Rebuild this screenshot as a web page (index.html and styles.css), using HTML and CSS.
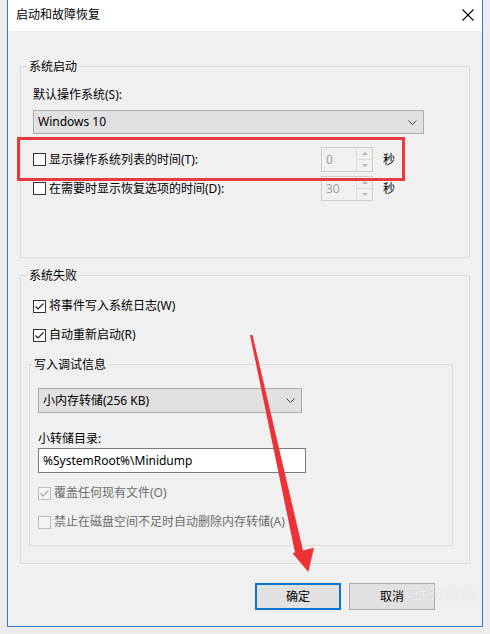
FILE: index.html
```html
<!DOCTYPE html>
<html>
<head>
<meta charset="utf-8">
<link rel="stylesheet" href="styles.css">
</head>
<body>
<div class="dialog">
  <div class="titlebar">
    <span class="title">启动和故障恢复</span>
    <svg class="close" width="12" height="12" viewBox="0 0 12 12"><path d="M0.5 0.5 L11.5 11.5 M11.5 0.5 L0.5 11.5" stroke="#000" stroke-width="1.1" fill="none"/></svg>
  </div>
  <div class="content">
    <div class="group g1">
      <div class="gtitle">系统启动</div>
      <div class="label l-default">默认操作系统(S):</div>
      <div class="combo c-os"><span>Windows 10</span><svg class="chev" width="9" height="5" viewBox="0 0 9 5"><path d="M0.5 0.5 L4.5 4.5 L8.5 0.5" stroke="#444" fill="none"/></svg></div>
      <div class="row r1">
        <span class="cb"></span>
        <span class="rlabel">显示操作系统列表的时间(T):</span>
        <div class="spin"><span class="sval">0</span><div class="sbtn"><span class="up"></span><span class="down"></span></div></div>
        <span class="unit">秒</span>
      </div>
      <div class="row r2">
        <span class="cb"></span>
        <span class="rlabel">在需要时显示恢复选项的时间(D):</span>
        <div class="spin"><span class="sval">30</span><div class="sbtn"><span class="up"></span><span class="down"></span></div></div>
        <span class="unit">秒</span>
      </div>
    </div>
    <div class="group g2">
      <div class="gtitle">系统失败</div>
      <div class="row r3">
        <span class="cb"><svg width="11" height="11" viewBox="0 0 11 11"><path d="M1.5 5.5 L4 8 L9.5 2.5" stroke="#222" stroke-width="1.2" fill="none"/></svg></span>
        <span class="rtext">将事件写入系统日志(W)</span>
      </div>
      <div class="row r4">
        <span class="cb"><svg width="11" height="11" viewBox="0 0 11 11"><path d="M1.5 5.5 L4 8 L9.5 2.5" stroke="#222" stroke-width="1.2" fill="none"/></svg></span>
        <span class="rtext">自动重新启动(R)</span>
      </div>
      <div class="group inner">
        <div class="gtitle">写入调试信息</div>
        <div class="combo c-dump"><span>小内存转储(256 KB)</span><svg class="chev" width="9" height="5" viewBox="0 0 9 5"><path d="M0.5 0.5 L4.5 4.5 L8.5 0.5" stroke="#444" fill="none"/></svg></div>
        <div class="label l-dir">小转储目录:</div>
        <div class="textbox">%SystemRoot%\Minidump</div>
        <div class="row r5 disabled">
          <span class="cb"><svg width="11" height="11" viewBox="0 0 11 11"><path d="M1.5 5.5 L4 8 L9.5 2.5" stroke="#a8a8a8" stroke-width="1.2" fill="none"/></svg></span>
          <span class="rtext">覆盖任何现有文件(O)</span>
        </div>
        <div class="row r6 disabled">
          <span class="cb"></span>
          <span class="rtext">禁止在磁盘空间不足时自动删除内存转储(A)</span>
        </div>
      </div>
    </div>
    <div class="buttons">
      <div class="btn default">确定</div>
      <div class="btn">取消</div>
    </div>
  </div>
</div>
<div class="watermark">S搜狗指南</div>
<svg class="overlay" width="490" height="634" viewBox="0 0 490 634">
  <rect x="18.5" y="138.5" width="385" height="41" fill="none" stroke="#e63a3f" stroke-width="3"/>
  <polygon points="250,335 252.5,335 303,550.6 314,547.7 308.3,572 292.5,553.3 295,552.6" fill="#ec3236"/>
</svg>
</body>
</html>
```

FILE: styles.css
```css
* { box-sizing: border-box; }

body {
  margin: 0;
  width: 490px;
  height: 634px;
  overflow: hidden;
  position: relative;
  background: #ececec;
  font-family: "Noto Sans", "Noto Sans CJK SC", sans-serif;
  font-size: 12px;
  line-height: 16px;
  color: #000;
}

.dialog {
  margin-left: 7px;
  width: 476px;
  height: 627px;
  background: #f0f0f0;
  border-left: 1px solid #2f7fcf;
  border-right: 1px solid #2f7fcf;
  border-bottom: 1px solid #2f7fcf;
  display: flex;
  flex-direction: column;
}

.titlebar {
  height: 31px;
  background: #fff;
  display: flex;
  align-items: center;
  justify-content: space-between;
  padding: 0 8px 0 8px;
}

.title { margin-top: -1px; }

.close { margin-right: 0; margin-top: -1px; }

.content {
  padding: 35px 12px 0 12px;
  display: flex;
  flex-direction: column;
}

.group {
  border: 1px solid #dcdcdc;
  display: flex;
  flex-direction: column;
  padding-left: 12px;
}

.gtitle {
  margin-top: -8px;
  margin-left: -6px;
  padding: 0 2px;
  background: #f0f0f0;
  align-self: flex-start;
  height: 16px;
}

.g1 { padding-bottom: 56px; }

.l-default { margin-top: 12px; }

.combo {
  background: #e1e1e1;
  border: 1px solid #adadad;
  display: flex;
  align-items: center;
  justify-content: space-between;
  padding: 0 6px 0 4px;
}

.c-os { margin-top: 7px; width: 391px; height: 24px; }

.row {
  display: flex;
  align-items: center;
}

.cb {
  width: 13px;
  height: 13px;
  border: 1px solid #333;
  background: #fff;
  display: flex;
  align-items: center;
  justify-content: center;
  flex: none;
}

.rlabel {
  width: 275px;
  padding-left: 3px;
}

.rtext { padding-left: 3px; }

.r1 { margin-top: 13px; }
.r2 { margin-top: 4px; }

.spin {
  width: 52px;
  height: 25px;
  border: 1px solid #cccccc;
  background: #f0f0f0;
  display: flex;
  color: #a0a0a0;
}

.sval {
  flex: 1;
  padding-left: 4px;
  display: flex;
  align-items: center;
}

.sbtn {
  width: 16px;
  display: flex;
  flex-direction: column;
  border-left: 1px solid #dedede;
}

.sbtn span {
  flex: 1;
  display: flex;
  align-items: center;
  justify-content: center;
}

.sbtn .up { border-bottom: 1px solid #dedede; }

.sbtn .up::before {
  content: "";
  border-left: 3px solid transparent;
  border-right: 3px solid transparent;
  border-bottom: 3px solid #b4b4b4;
}

.sbtn .down::before {
  content: "";
  border-left: 3px solid transparent;
  border-right: 3px solid transparent;
  border-top: 3px solid #b4b4b4;
}

.unit { margin-left: 10px; }

.g2 {
  margin-top: 17px;
  padding-bottom: 17px;
}

.r3 { margin-top: 14px; height: 16px; }
.r4 { margin-top: 13px; height: 16px; }

.inner {
  margin-top: 21px;
  margin-left: -4px;
  width: 424px;
  padding-left: 8px;
  padding-bottom: 15px;
}

.c-dump { margin-top: 15px; width: 264px; height: 25px; }

.l-dir { margin-top: 18px; }

.textbox {
  margin-top: 1px;
  width: 268px;
  height: 25px;
  background: #fff;
  border: 1px solid #7a7a7a;
  padding-left: 4px;
  display: flex;
  align-items: center;
}

.r5 { margin-top: 12px; height: 16px; }
.r6 { margin-top: 13px; height: 16px; }

.disabled { color: #6d6d6d; }
.disabled .cb { border-color: #bcbcbc; background: #f4f4f4; }

.buttons {
  margin-top: 19px;
  display: flex;
  justify-content: flex-end;
  gap: 8px;
  padding-right: 35px;
}

.btn {
  width: 86px;
  height: 27px;
  background: #e1e1e1;
  border: 1px solid #adadad;
  display: flex;
  align-items: center;
  justify-content: center;
}

.btn.default { border: 2px solid #0a74d0; }

.watermark {
  position: absolute;
  left: 404px;
  top: 584px;
  font-size: 15px;
  color: rgba(255, 255, 255, 0.6);
  text-shadow: 0 0 1px rgba(170, 170, 170, 0.35);
  letter-spacing: 1px;
}

.overlay {
  position: absolute;
  left: 0;
  top: 0;
  pointer-events: none;
}
```
